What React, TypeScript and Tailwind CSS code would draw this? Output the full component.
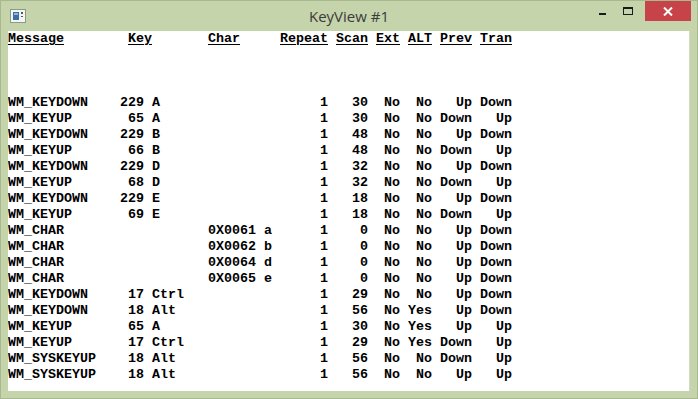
import React from 'react';

type Row = {
  msg: string;
  code?: string;
  key?: string;
  chr?: string;
  ch?: string;
  rep: string;
  scan: string;
  ext: string;
  alt: string;
  prev: string;
  tran: string;
};

const rows: Row[] = [
  { msg: 'WM_KEYDOWN', code: '229', key: 'A', rep: '1', scan: '30', ext: 'No', alt: 'No', prev: 'Up', tran: 'Down' },
  { msg: 'WM_KEYUP', code: '65', key: 'A', rep: '1', scan: '30', ext: 'No', alt: 'No', prev: 'Down', tran: 'Up' },
  { msg: 'WM_KEYDOWN', code: '229', key: 'B', rep: '1', scan: '48', ext: 'No', alt: 'No', prev: 'Up', tran: 'Down' },
  { msg: 'WM_KEYUP', code: '66', key: 'B', rep: '1', scan: '48', ext: 'No', alt: 'No', prev: 'Down', tran: 'Up' },
  { msg: 'WM_KEYDOWN', code: '229', key: 'D', rep: '1', scan: '32', ext: 'No', alt: 'No', prev: 'Up', tran: 'Down' },
  { msg: 'WM_KEYUP', code: '68', key: 'D', rep: '1', scan: '32', ext: 'No', alt: 'No', prev: 'Down', tran: 'Up' },
  { msg: 'WM_KEYDOWN', code: '229', key: 'E', rep: '1', scan: '18', ext: 'No', alt: 'No', prev: 'Up', tran: 'Down' },
  { msg: 'WM_KEYUP', code: '69', key: 'E', rep: '1', scan: '18', ext: 'No', alt: 'No', prev: 'Down', tran: 'Up' },
  { msg: 'WM_CHAR', chr: '0X0061', ch: 'a', rep: '1', scan: '0', ext: 'No', alt: 'No', prev: 'Up', tran: 'Down' },
  { msg: 'WM_CHAR', chr: '0X0062', ch: 'b', rep: '1', scan: '0', ext: 'No', alt: 'No', prev: 'Up', tran: 'Down' },
  { msg: 'WM_CHAR', chr: '0X0064', ch: 'd', rep: '1', scan: '0', ext: 'No', alt: 'No', prev: 'Up', tran: 'Down' },
  { msg: 'WM_CHAR', chr: '0X0065', ch: 'e', rep: '1', scan: '0', ext: 'No', alt: 'No', prev: 'Up', tran: 'Down' },
  { msg: 'WM_KEYDOWN', code: '17', key: 'Ctrl', rep: '1', scan: '29', ext: 'No', alt: 'No', prev: 'Up', tran: 'Down' },
  { msg: 'WM_KEYDOWN', code: '18', key: 'Alt', rep: '1', scan: '56', ext: 'No', alt: 'Yes', prev: 'Up', tran: 'Down' },
  { msg: 'WM_KEYUP', code: '65', key: 'A', rep: '1', scan: '30', ext: 'No', alt: 'Yes', prev: 'Up', tran: 'Up' },
  { msg: 'WM_KEYUP', code: '17', key: 'Ctrl', rep: '1', scan: '29', ext: 'No', alt: 'Yes', prev: 'Down', tran: 'Up' },
  { msg: 'WM_SYSKEYUP', code: '18', key: 'Alt', rep: '1', scan: '56', ext: 'No', alt: 'No', prev: 'Down', tran: 'Up' },
  { msg: 'WM_SYSKEYUP', code: '18', key: 'Alt', rep: '1', scan: '56', ext: 'No', alt: 'No', prev: 'Up', tran: 'Up' },
];

// fixed-width columns, same as the original TextOut positions
function put(line: string[], col: number, text: string) {
  for (let i = 0; i < text.length; i++) line[col + i] = text[i];
}

function putRight(line: string[], end: number, text: string) {
  put(line, end - text.length, text);
}

function format(r: Row) {
  const line = Array(64).fill(' ');
  put(line, 0, r.msg);
  if (r.code) {
    putRight(line, 17, r.code);
    put(line, 18, r.key || '');
  }
  if (r.chr) {
    put(line, 25, r.chr);
    put(line, 32, r.ch || '');
  }
  putRight(line, 40, r.rep);
  putRight(line, 45, r.scan);
  putRight(line, 49, r.ext);
  putRight(line, 53, r.alt);
  putRight(line, 58, r.prev);
  putRight(line, 63, r.tran);
  return line.join('').replace(/\s+$/, '');
}

const headers: [string, number][] = [
  ['Message', 0],
  ['Key', 15],
  ['Char', 25],
  ['Repeat', 34],
  ['Scan', 41],
  ['Ext', 46],
  ['ALT', 50],
  ['Prev', 54],
  ['Tran', 59],
];

function AppIcon() {
  return (
    <svg width="16" height="14" viewBox="0 0 16 14">
      <rect x="0.5" y="0.5" width="15" height="13" fill="#f4f6f0" stroke="#8a9a8a" />
      <rect x="3" y="3" width="6" height="8" fill="#3a6ea8" />
      <rect x="4" y="4" width="4" height="2" fill="#8fb6e0" />
      <rect x="11" y="3" width="2" height="2" fill="#4a5a6a" />
      <rect x="11" y="7" width="2" height="1" fill="#4a5a6a" />
    </svg>
  );
}

export default function App() {
  return (
    <div className="w-[698px] h-[399px] bg-[#c5d4aa] border border-[#a9b98f] flex flex-col overflow-hidden">
      {/* Title bar */}
      <div className="h-[30px] grid grid-cols-[1fr_auto_1fr] items-start shrink-0">
        <div className="pl-[9px] pt-[8px]">
          <AppIcon />
        </div>
        <div
          className="pt-[6px] text-[15px] leading-[18px] text-[#3b3b3b]"
          style={{ fontFamily: '"Open Sans", "Noto Sans", sans-serif' }}
        >
          KeyView #1
        </div>
        <div className="flex justify-end items-start">
          <div className="w-[26px] h-[20px] flex items-center justify-center">
            <div className="w-[7px] h-[2px] bg-[#1a1a1a] mt-[6px]" />
          </div>
          <div className="w-[26px] h-[20px] flex items-center justify-center mr-[4px]">
            <div className="w-[10px] h-[8px] border border-[#1a1a1a] border-t-2" />
          </div>
          <div className="w-[46px] h-[20px] bg-[#c7434a] flex items-center justify-center mr-[6px]">
            <svg width="10" height="9" viewBox="0 0 10 9">
              <path d="M1 0.5 L9 8.5 M9 0.5 L1 8.5" stroke="#ffffff" strokeWidth="2" />
            </svg>
          </div>
        </div>
      </div>

      {/* Client area */}
      <div className="ml-[7px] w-[682px] h-[360px] bg-white border-r border-[#d4d8cc] overflow-hidden">
        <div
          className="whitespace-pre text-[13.333px] leading-4 font-bold text-black"
          style={{ fontFamily: '"Liberation Mono", monospace' }}
        >
          <div className="relative h-4">
            {headers.map(([h, col]) => (
              <span key={h} className="underline underline-offset-2" style={{ position: 'absolute', left: col * 8 }}>
                {h}
              </span>
            ))}
          </div>
          <div className="h-12" />
          {rows.map((r, i) => (
            <div key={i} className="h-4">
              {format(r)}
            </div>
          ))}
        </div>
      </div>
    </div>
  );
}
